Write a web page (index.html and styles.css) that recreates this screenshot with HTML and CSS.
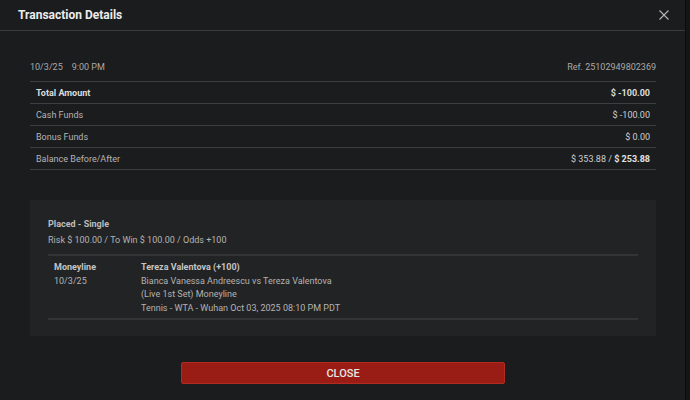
FILE: index.html
```html
<!DOCTYPE html>
<html>
<head>
<meta charset="utf-8">
<link rel="stylesheet" href="styles.css">
</head>
<body>
<div class="screen">
  <div class="modal">
    <div class="header">
      <div class="title">Transaction Details</div>
      <svg class="x" width="10" height="10" viewBox="0 0 10 10"><path d="M0.5 0.5L9.5 9.5M9.5 0.5L0.5 9.5" stroke="#b5b5b5" stroke-width="1.1" fill="none"/></svg>
    </div>
    <div class="content">
      <div class="meta">
        <span class="when"><span>10/3/25</span><span>9:00 PM</span></span>
        <span>Ref. 25102949802369</span>
      </div>
      <div class="table">
        <div class="row strong"><span>Total Amount</span><span>$ -100.00</span></div>
        <div class="row"><span>Cash Funds</span><span>$ -100.00</span></div>
        <div class="row"><span>Bonus Funds</span><span>$ 0.00</span></div>
        <div class="row"><span>Balance Before/After</span><span>$ 353.88 / <b>$ 253.88</b></span></div>
      </div>
      <div class="card">
        <div class="placed">Placed - Single</div>
        <div class="risk">Risk $ 100.00 / To Win $ 100.00 / Odds +100</div>
        <div class="leg">
          <div class="legleft">
            <div class="bold">Moneyline</div>
            <div>10/3/25</div>
          </div>
          <div class="legright">
            <div class="bold">Tereza Valentova (+100)</div>
            <div>Bianca Vanessa Andreescu vs Tereza Valentova</div>
            <div>(Live 1st Set) Moneyline</div>
            <div>Tennis - WTA - Wuhan Oct 03, 2025 08:10 PM PDT</div>
          </div>
        </div>
      </div>
      <div class="actions">
        <button class="close">CLOSE</button>
      </div>
    </div>
  </div>
  <div class="strip"></div>
</div>
</body>
</html>
```
FILE: styles.css
```css
html, body {
  margin: 0;
  padding: 0;
  background: #1b1c1e;
  font-family: Roboto, "Liberation Sans", sans-serif;
  font-size: 9px;
  color: #b9b9b9;
}
.screen {
  display: flex;
  width: 690px;
  height: 400px;
  overflow: hidden;
}
.modal {
  width: 686px;
  background: #1b1c1e;
  display: flex;
  flex-direction: column;
}
.strip {
  width: 4px;
  background: #141516;
  border-left: 1px solid #0c0c0c;
}
.header {
  height: 31px;
  box-sizing: border-box;
  border-bottom: 1px solid #3b3c3e;
  display: flex;
  align-items: center;
  justify-content: space-between;
  padding: 0 16px 1px 18px;
}
.title {
  font-size: 12px;
  font-weight: 700;
  color: #ececec;
}
.content {
  padding: 0 29px 0 30px;
}
.meta {
  display: flex;
  justify-content: space-between;
  height: 50px;
  align-items: flex-end;
  padding-bottom: 9px;
  box-sizing: border-box;
  color: #a9a9a9;
}
.when { display: flex; gap: 9px; }
.table {
  border-top: 1px solid #3d3e40;
}
.row {
  height: 22px;
  box-sizing: border-box;
  border-bottom: 1px solid #3d3e40;
  display: flex;
  justify-content: space-between;
  align-items: center;
  padding: 0 6px;
  color: #b5b5b5;
}
.row span:last-child { color: #cfcfcf; }
.row.strong span { font-weight: 700; color: #dcdcdc; }
.row b { font-weight: 700; color: #e2e2e2; }
.card {
  margin-top: 30px;
  background: #222325;
  height: 136px;
  box-sizing: border-box;
  padding: 18px 18px 0 18px;
}
.placed {
  font-weight: 700;
  color: #bdbdbd;
  line-height: 12px;
}
.risk {
  margin-top: 4px;
  line-height: 12px;
  color: #b3b3b3;
}
.leg {
  margin-top: 8px;
  border-top: 2px solid #333436;
  border-bottom: 2px solid #333436;
  display: flex;
  padding: 5px 6px 3px 6px;
  line-height: 13.5px;
  color: #b3b3b3;
}
.legleft { width: 87px; }
.bold { font-weight: 700; color: #c4c4c4; }
.actions {
  display: flex;
  justify-content: center;
  margin-top: 26px;
}
.close {
  width: 324px;
  height: 22px;
  background: #991d15;
  border: 1px solid #b32a20;
  border-radius: 2px;
  color: #e6e6e6;
  font-family: Roboto, "Liberation Sans", sans-serif;
  font-size: 11px;
  font-weight: 500;
  padding: 0;
}
```
